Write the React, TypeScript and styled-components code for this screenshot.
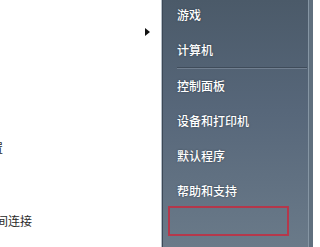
import React from 'react'
import styled, { createGlobalStyle } from 'styled-components'

const GlobalStyle = createGlobalStyle`
    html, body {
        margin: 0;
        padding: 0;
        background: #ffffff;
    }
    body {
        font-family: "Noto Sans CJK SC", "Liberation Sans", sans-serif;
    }
`

const rightItems = ['控制面板', '设备和打印机', '默认程序', '帮助和支持']

export default function App() {
    return (
        <>
            <GlobalStyle />
            <StartMenu>
                <ProgramsPane>
                    <ArrowRow $top={28}>
                        <SubmenuArrow />
                    </ArrowRow>
                    <ClippedText $top={105} $shift={-9}>
                        置
                    </ClippedText>
                    <ClippedText $top={61} $shift={-4}>
                        间连接
                    </ClippedText>
                </ProgramsPane>
                <PlacesPane>
                    <PlacesList>
                        <PlaceItem>游戏</PlaceItem>
                        <PlaceItem>计算机</PlaceItem>
                        <Separator />
                        {rightItems.map((label) => (
                            <PlaceItem key={label}>{label}</PlaceItem>
                        ))}
                    </PlacesList>
                    <Highlight />
                </PlacesPane>
            </StartMenu>
        </>
    )
}

const StartMenu = styled.div`
    display: flex;
    width: 313px;
    height: 247px;
    overflow: hidden;
`

const ProgramsPane = styled.div`
    display: flex;
    flex-direction: column;
    width: 161px;
    flex-shrink: 0;
    background: #ffffff;
    overflow: hidden;
`

const ArrowRow = styled.div<{ $top: number }>`
    display: flex;
    justify-content: flex-end;
    margin-top: ${(p) => p.$top}px;
    padding-right: 11px;
    height: 9px;
`

const SubmenuArrow = styled.span`
    width: 0;
    height: 0;
    border-top: 4.5px solid transparent;
    border-bottom: 4.5px solid transparent;
    border-left: 5px solid #111111;
`

const ClippedText = styled.div<{ $top: number; $shift: number }>`
    margin-top: ${(p) => p.$top}px;
    margin-left: ${(p) => p.$shift}px;
    height: 12px;
    font-size: 12px;
    line-height: 12px;
    color: #2a2a2a;
    white-space: nowrap;
`

const PlacesPane = styled.div`
    position: relative;
    flex: 1;
    background: linear-gradient(180deg, #4b5a69 0%, #57677a 45%, #6a7a89 100%);
    border-left: 1px solid #b4bec8;
    box-shadow:
        inset 1px 0 0 #3c4856,
        inset -4px 0 0 #5f6f7e,
        inset -5px 0 0 #8696a4;
`

const PlacesList = styled.div`
    display: flex;
    flex-direction: column;
    margin-top: -3px;
    padding: 0 6px 0 15px;
`

const PlaceItem = styled.div`
    height: 35px;
    display: flex;
    align-items: center;
    font-size: 12px;
    font-weight: 500;
    color: #ffffff;
    text-shadow: 0 0 2px rgba(20, 30, 40, 0.6);
    white-space: nowrap;
`

const Separator = styled.div`
    height: 1px;
    background: #3f4c5a;
    box-shadow: 0 1px 0 rgba(150, 165, 180, 0.45);
`

const Highlight = styled.div`
    position: absolute;
    left: 6px;
    top: 206px;
    width: 117px;
    height: 26px;
    border: 2px solid rgba(200, 40, 60, 0.8);
`
